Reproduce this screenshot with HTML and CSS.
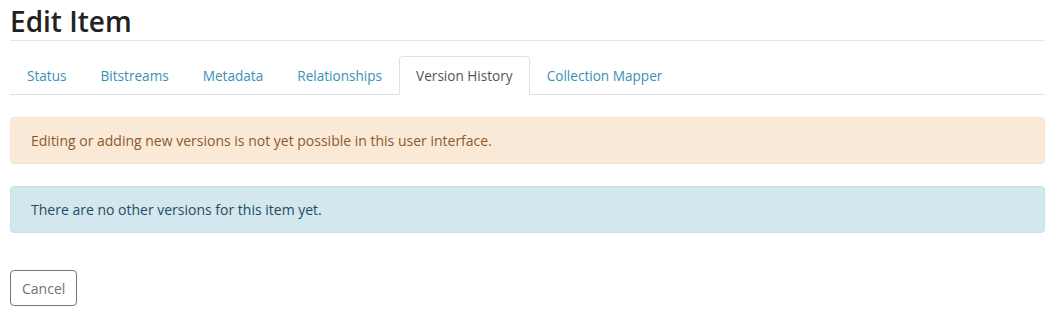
FILE: index.html
```html
<!DOCTYPE html>
<html lang="en">
<head>
    <meta charset="UTF-8">
    <meta name="viewport" content="width=device-width, initial-scale=1.0">
    <title>Edit Item</title>
    <link rel="stylesheet" href="styles.css">
</head>
<body>

<div class="container">
    <h2 class="page-title">Edit Item</h2>

    <ul class="nav-tabs">
        <li><a href="#" class="nav-link">Status</a></li>
        <li><a href="#" class="nav-link">Bitstreams</a></li>
        <li><a href="#" class="nav-link">Metadata</a></li>
        <li><a href="#" class="nav-link">Relationships</a></li>
        <li><a href="#" class="nav-link active">Version History</a></li>
        <li><a href="#" class="nav-link">Collection Mapper</a></li>
    </ul>

    <div class="tab-content">
        <div class="alert alert-warning">Editing or adding new versions is not yet possible in this user interface.</div>
        <div class="alert alert-info">There are no other versions for this item yet.</div>
    </div>

    <button class="btn-cancel">Cancel</button>
</div>

</body>
</html>
```

FILE: styles.css
```css
body {
    margin: 0;
    font-family: "Open Sans", "Noto Sans", sans-serif;
    font-size: 14px;
    color: #212529;
    background-color: #fff;
}
.container {
    padding: 0 12px 0 10px;
}
.page-title {
    margin: 0;
    padding-top: 4px;
    padding-bottom: 2px;
    font-size: 28px;
    font-weight: 600;
    line-height: 34px;
    color: #222;
    border-bottom: 1px solid #e6e6e6;
}
.nav-tabs {
    display: flex;
    list-style-type: none;
    margin: 15px 0 0;
    padding: 0;
    border-bottom: 1px solid #dee2e6;
}
.nav-link {
    display: block;
    padding: 8px 16px;
    margin-bottom: -1px;
    font-size: 13.6px;
    line-height: 21px;
    color: #3a8fb7;
    text-decoration: none;
    border: 1px solid transparent;
    border-radius: 4px 4px 0 0;
}
.nav-link.active {
    color: #555;
    background-color: #fff;
    border-color: #dee2e6 #dee2e6 #fff;
}
.tab-content {
    padding-top: 22px;
}
.alert {
    padding: 12px 20px;
    margin-bottom: 22px;
    line-height: 21px;
    border: 1px solid transparent;
    border-radius: 4px;
}
.alert-warning {
    color: #8b5a2b;
    background-color: #fbe9d7;
    border-color: #f9e2cb;
}
.alert-info {
    color: #1f4c5f;
    background-color: #d3e7ef;
    border-color: #c6e0ea;
}
.btn-cancel {
    margin-top: 15px;
    padding: 7px 11px 6px;
    font-family: inherit;
    font-size: 14px;
    line-height: 21px;
    color: #6c757d;
    background-color: #fff;
    border: 1px solid #6c757d;
    border-radius: 4px;
}
```
